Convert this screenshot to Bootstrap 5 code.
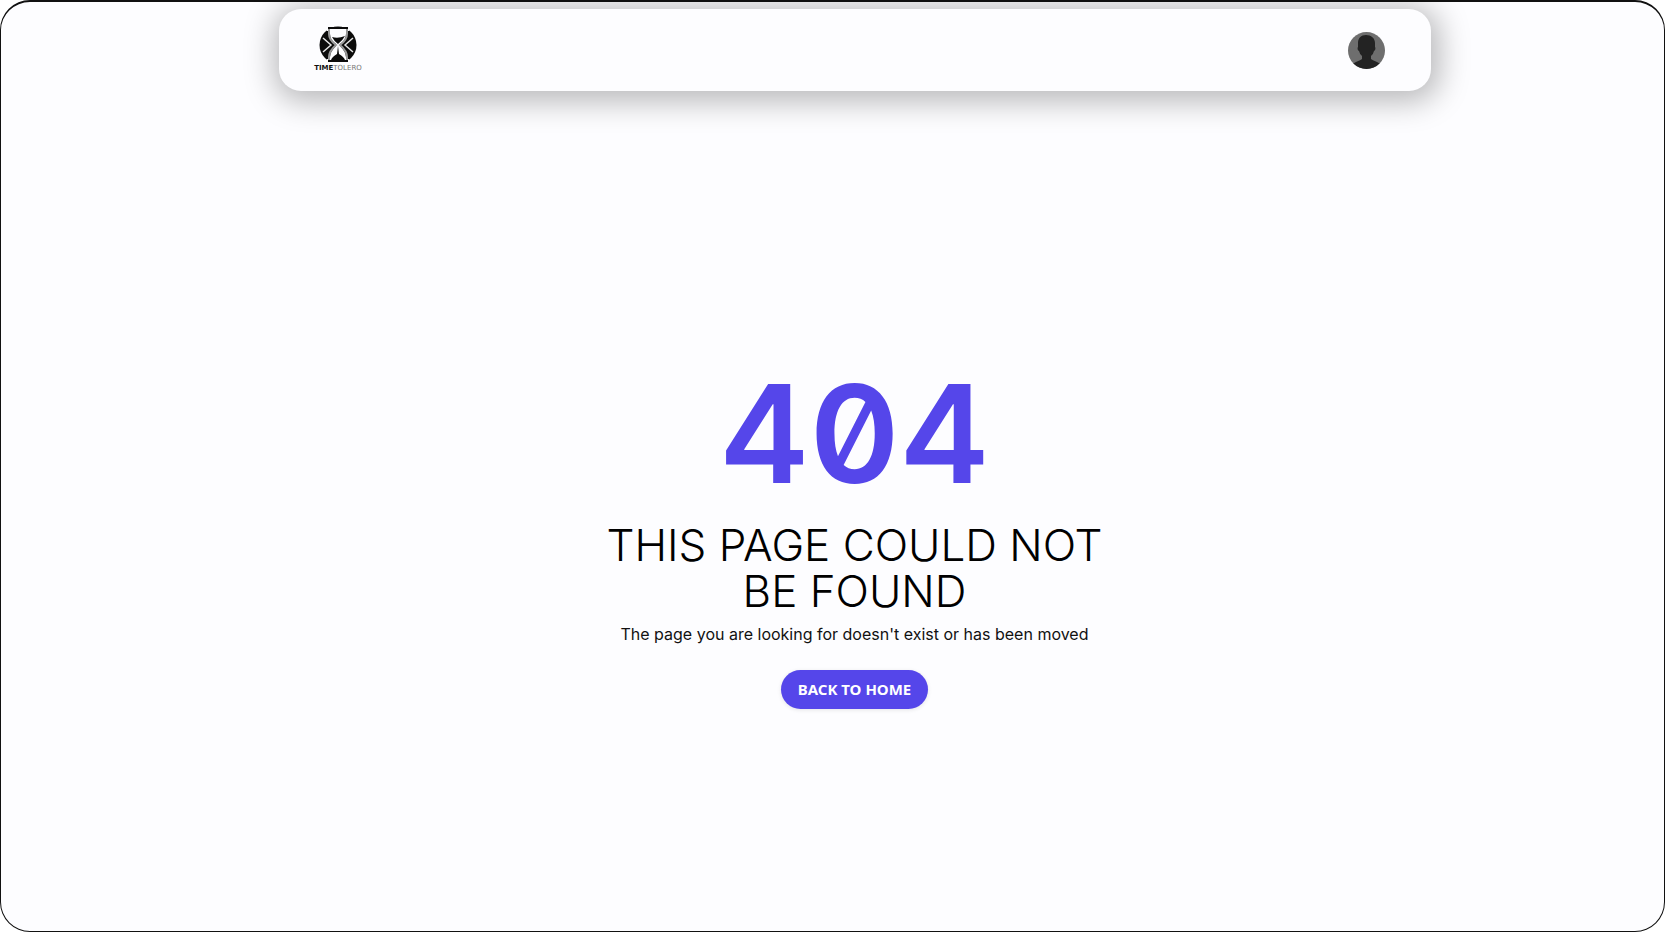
<!DOCTYPE html>
<html lang="en">
<head>
<meta charset="utf-8">
<meta name="viewport" content="width=device-width, initial-scale=1">
<title>404 - Timetolero</title>
<link href="https://cdn.jsdelivr.net/npm/bootstrap@5.3.0/dist/css/bootstrap.min.css" rel="stylesheet">
<style>
  body { font-family: Inter, "Liberation Sans", sans-serif; background: #fff; color: #111; }
  .app-frame { border: 1px solid #111; border-top-width: 2px; border-radius: 30px; background: #fdfdff; padding: 7px 0 0 44px; }
  .top-bar { width: 100%; max-width: 1152px; height: 82px; border-radius: 22px; background: #fdfdff; padding: 0 46px 0 36px; box-shadow: 2px 4px 30px 7px rgba(0, 0, 0, .27); }
  .brand-logo { width: 46px; height: 46px; overflow: visible; }
  .avatar-btn svg { display: block; width: 37px; height: 37px; }
  .error-main { padding-top: 56px; }
  .error-code { font-size: 136px; line-height: 128px; font-weight: 600; font-feature-settings: "zero"; color: #5546ea; }
  .error-title { font-weight: 300; font-size: 44px; line-height: 46px; color: #000; max-width: 540px; }
  .error-text { font-size: 16px; line-height: 24px; }
  .home-btn { --bs-btn-bg: #5546ea; --bs-btn-color: #fff; --bs-btn-hover-bg: #4637d8; --bs-btn-hover-color: #fff; font-family: "Noto Sans", sans-serif; font-size: 15px; line-height: 23px; font-weight: 700; padding: 8px 17px; border: 0; box-shadow: 0 1px 4px rgba(0, 0, 0, .1); }
</style>
</head>
<body>
<div class="app-frame min-vh-100 d-flex flex-column align-items-center">
  <header class="top-bar d-flex align-items-center justify-content-between">
    <a href="#" aria-label="Timetolero">
      <svg class="brand-logo d-block" viewBox="0 0 46 46">
        <circle cx="23" cy="18" r="18.500" fill="#0b0b0b"/>
        <path d="M12 0h22v4H12zM12 32h22v6H12z" fill="#fdfdff"/>
        <path d="M15 3h16v4q0 6-6 10v2q6 6 6 11v3H15v-3q0-5 6-11v-2q-6-4-6-10z" fill="#fdfdff"/>
        <path d="M14 2v5q0 6 7 11q-7 6-7 12v3M32 2v5q0 6-7 11q7 6 7 12v3" fill="none" stroke="#999" stroke-width="2"/>
        <path d="M17 10q6 2 13-1q-2 4-7 8q-4-3-6-7zM16 33q1-3 6-6l1-8 1 8q5 3 6 6z" fill="#0b0b0b"/>
        <path d="M8 11l8 7-8 7M38 11l-8 7 8 7" fill="none" stroke="#e4e4e4" stroke-width="1.500"/>
        <path d="M13 1h20M13 34h20" stroke="#0b0b0b" stroke-width="2"/>
        <text x="23" y="43" text-anchor="middle" font-family="DejaVu Sans, sans-serif" font-size="7" fill="#777"><tspan font-weight="700" fill="#111">TIME</tspan>TOLERO</text>
      </svg>
    </a>
    <button type="button" class="avatar-btn btn p-0 border-0 rounded-circle" aria-label="Account">
      <svg viewBox="0 0 37 37">
        <defs><clipPath id="avatar-clip"><circle cx="18.500" cy="18.500" r="18.500"/></clipPath></defs>
        <g clip-path="url(#avatar-clip)">
          <path d="M0 0h37v37H0z" fill="#6e6e6e"/>
          <path d="M18 3c5 0 9 3 9 8v4c1 1 0 4-1 4q-1 4-3 5v3q1 1 6 3t6 7H2q1-5 6-7t6-3v-3q-2-1-3-5c-1 0-2-3-1-4v-4c0-5 3-8 8-8z" fill="#232323"/>
        </g>
      </svg>
    </button>
  </header>
  <main class="error-main flex-grow-1 d-flex flex-column align-items-center justify-content-center text-center">
    <h1 class="error-code mb-4">404</h1>
    <h2 class="error-title mb-2">THIS PAGE COULD NOT BE FOUND</h2>
    <p class="error-text mb-4">The page you are looking for doesn't exist or has been moved</p>
    <a href="#" class="home-btn btn rounded-pill">BACK TO HOME</a>
  </main>
</div>
<script src="https://cdn.jsdelivr.net/npm/bootstrap@5.3.0/dist/js/bootstrap.bundle.min.js"></script>
</body>
</html>
